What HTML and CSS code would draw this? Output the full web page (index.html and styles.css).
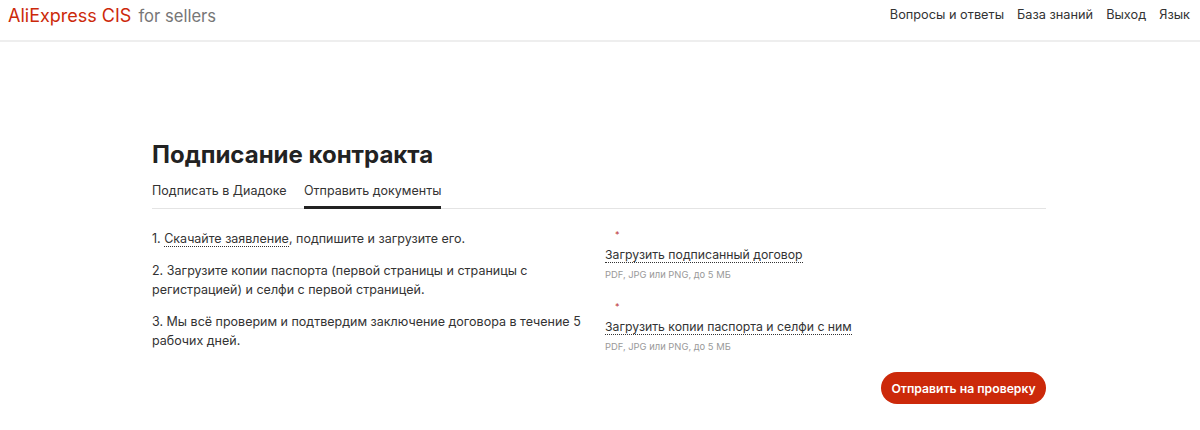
FILE: index.html
```html
<!DOCTYPE html>
<html lang="ru">
<head>
<meta charset="utf-8">
<title>AliExpress CIS for sellers</title>
<link rel="stylesheet" href="styles.css">
</head>
<body>
<header class="header">
  <div class="logo"><span class="logo-red">AliExpress CIS</span> <span class="logo-grey">for sellers</span></div>
  <nav class="nav">
    <a>Вопросы и ответы</a>
    <a>База знаний</a>
    <a>Выход</a>
    <a>Язык</a>
  </nav>
</header>
<main class="main">
  <h1 class="title">Подписание контракта</h1>
  <div class="tabs">
    <div class="tab">Подписать в Диадоке</div>
    <div class="tab tab-active">Отправить документы</div>
  </div>
  <div class="columns">
    <div class="steps">
      <p>1. <span class="dotted">Скачайте заявление</span>, подпишите и загрузите его.</p>
      <p>2. Загрузите копии паспорта (первой страницы и страницы с регистрацией) и селфи с первой страницей.</p>
      <p>3. Мы всё проверим и подтвердим заключение договора в течение 5 рабочих дней.</p>
    </div>
    <div class="uploads">
      <div class="upload">
        <div class="req">*</div>
        <div class="upload-link"><span class="dotted">Загрузить подписанный договор</span></div>
        <div class="hint">PDF, JPG или PNG, до 5 МБ</div>
      </div>
      <div class="upload">
        <div class="req">*</div>
        <div class="upload-link"><span class="dotted">Загрузить копии паспорта и селфи с ним</span></div>
        <div class="hint">PDF, JPG или PNG, до 5 МБ</div>
      </div>
    </div>
  </div>
  <div class="actions"><button class="submit">Отправить на проверку</button></div>
</main>
</body>
</html>
```
FILE: styles.css
```css
* { box-sizing: border-box; }
html, body { margin: 0; padding: 0; background: #fff; }
body { font-family: Inter, "Noto Sans", sans-serif; color: #222; height: 430px; overflow: hidden; }
.header { height: 42px; border-bottom: 2px solid #eee; display: flex; justify-content: space-between; align-items: center; padding: 0 10px 10px 8px; }
.logo { font-size: 18px; line-height: 30px; padding-top: 1px; }
.logo-red { color: #cc290a; }
.logo-grey { color: #777; font-size: 16.6px; margin-left: 2px; }
.nav { display: flex; gap: 13px; font-size: 12.75px; color: #333; margin-top: -1px; }
.main { width: 894px; margin-left: 152px; padding-top: 97px; }
.title { margin: 0; font-size: 24px; line-height: 32px; font-weight: 700; color: #222; }
.tabs { display: flex; gap: 17.5px; margin-top: 5px; border-bottom: 1px solid #e4e4e4; height: 33px; font-size: 12.5px; }
.tab { padding-top: 5px; height: 33px; line-height: 20px; color: #333; }
.tab-active { border-bottom: 3px solid #222; }
.columns { display: flex; margin-top: 20px; }
.steps { width: 453px; font-size: 12.5px; line-height: 19px; color: #333; }
.steps p { margin: 0 0 13px; }
.steps p:last-child { margin-bottom: 0; }
.dotted { border-bottom: 1px dotted #333; }
.uploads { flex: 1; display: flex; flex-direction: column; gap: 18px; }
.req { color: #b33; font-size: 9px; line-height: 12px; padding-left: 10px; }
.upload-link { margin-top: 4px; font-size: 12.25px; line-height: 20px; color: #333; }
.hint { margin-top: 2px; font-size: 9.4px; line-height: 16px; color: #999; }
.actions { display: flex; justify-content: flex-end; margin-top: 17px; }
.submit { height: 32px; width: 165px; border: 0; border-radius: 16px; background: #cc290a; color: #fff; font: 600 12.2px Inter, sans-serif; padding: 0; }
```
